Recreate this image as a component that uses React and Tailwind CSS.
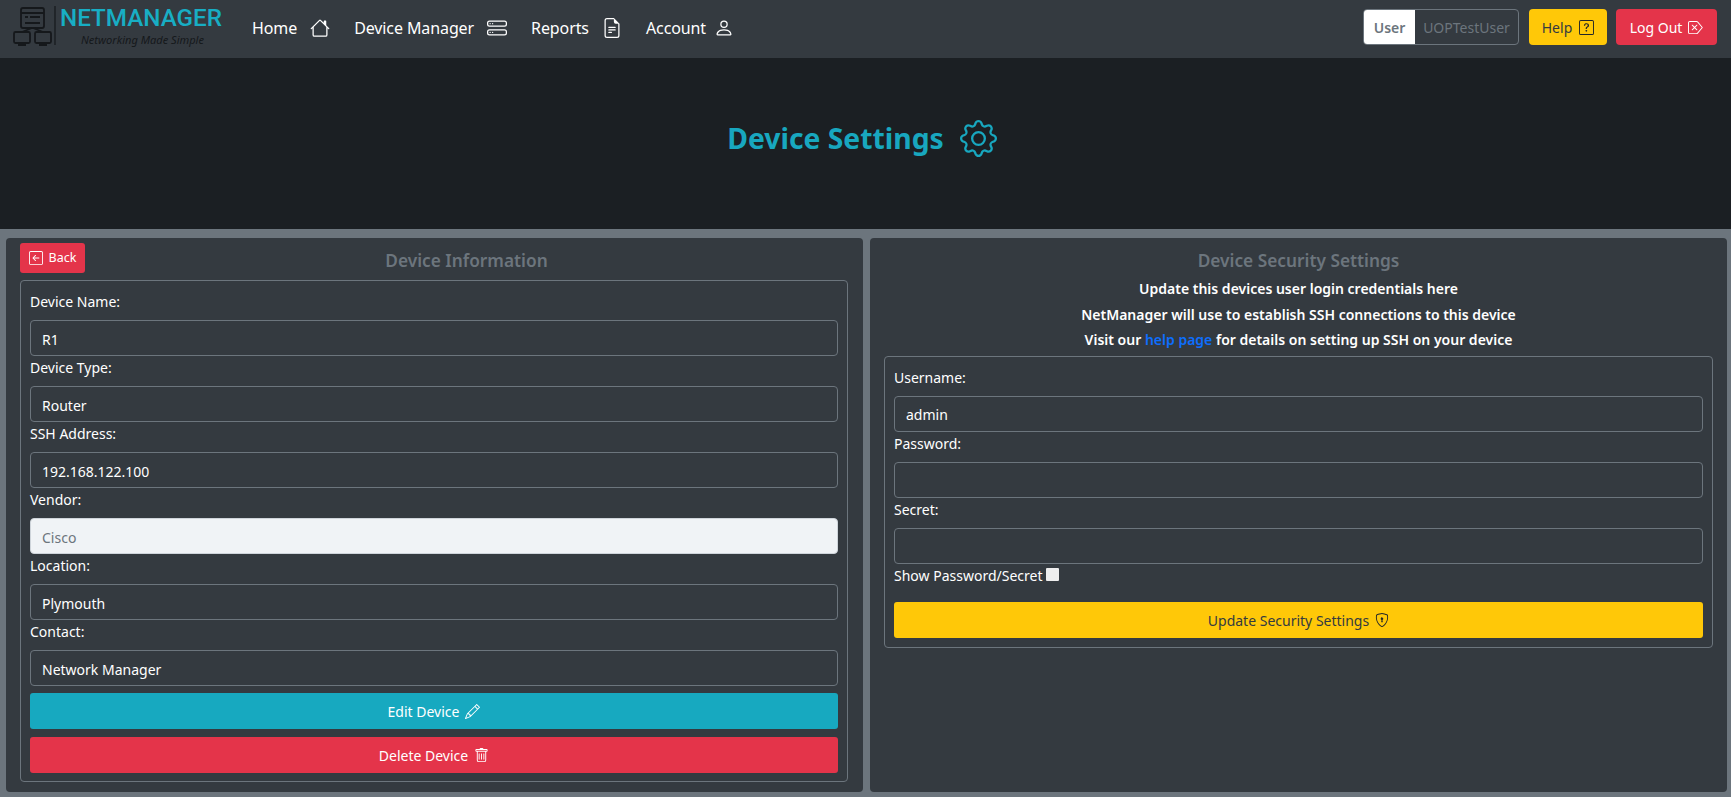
import {
  BsHouse,
  BsHddStack,
  BsFileEarmarkText,
  BsPerson,
  BsQuestionSquare,
  BsBackspaceReverse,
  BsGear,
  BsArrowLeftSquare,
  BsPencil,
  BsTrash,
  BsShieldLock,
} from "react-icons/bs";

const font = { fontFamily: '"Noto Sans", sans-serif' };

const Logo = () => (
  <svg width="225" height="58" viewBox="0 0 225 58" className="shrink-0">
    <g fill="none" stroke="#15181b" strokeWidth="1.8">
      <rect x="21" y="10" width="23" height="20" rx="2" />
      <path d="M21 15h23M25 19h3M30 19h10M25 25h15M32 30l-10 4M33 30l10 4" />
      <rect x="14" y="34" width="16" height="11" rx="1.5" />
      <rect x="35" y="34" width="16" height="11" rx="1.5" />
      <path d="M18 47h8M39 47h8" />
    </g>
    <path d="M55 8v39" stroke="#15181b" strokeWidth="1.2" />
    <text x="60" y="28" fill="#18aec4" fontSize="24.5" fontWeight="500" fontFamily="Roboto, sans-serif" textLength="162" lengthAdjust="spacingAndGlyphs">
      NETMANAGER
    </text>
    <text x="81" y="46" fill="#15181b" fontSize="11.5" fontStyle="italic" fontFamily="'Noto Sans', sans-serif" textLength="123" lengthAdjust="spacingAndGlyphs">
      Networking Made Simple
    </text>
  </svg>
);

const NavLink = ({ label, Icon, gap, size = 20 }) => (
  <a className={`flex items-center text-white text-[16px] tracking-[-0.1px] mt-[2px] ${gap}`}>
    <span>{label}</span>
    <Icon size={size} />
  </a>
);

const Field = ({ label, value, disabled }) => (
  <div>
    <label className="block h-6 mb-[6px] text-[14px] leading-[24px] text-white">{label}</label>
    <div
      className={`h-9 px-[11px] pt-[2px] flex items-center rounded border text-[14px] ${
        disabled
          ? "bg-[#f0f3f6] border-[#ced4da] text-[#6c757d]"
          : "bg-[#343a40] border-[#6c757d] text-white"
      }`}
    >
      {value}
    </div>
  </div>
);

const App = () => {
  return (
    <div className="h-[797px] flex flex-col bg-[#6c757d] overflow-hidden" style={font}>
      <nav className="h-[58px] shrink-0 bg-[#343a40] flex items-center justify-between pr-[14px] pb-1">
        <div className="flex items-center">
          <Logo />
          <div className="flex items-center gap-6 ml-[27px]">
            <NavLink label="Home" Icon={BsHouse} gap="gap-[13px]" />
            <NavLink label="Device Manager" Icon={BsHddStack} gap="gap-[13px]" />
            <NavLink label="Reports" Icon={BsFileEarmarkText} gap="gap-[13px]" />
            <NavLink label="Account" Icon={BsPerson} gap="gap-[8px]" />
          </div>
        </div>
        <div className="flex items-center text-[14px]">
          <div className="flex h-9 w-[156px] rounded border border-[#6c757d] overflow-hidden">
            <div className="w-[51px] bg-white text-[#6c757d] font-semibold flex items-center justify-center">User</div>
            <div className="flex-1 text-[#6c757d] flex items-center justify-center">UOPTestUser</div>
          </div>
          <button className="ml-[10px] h-9 w-[78px] rounded bg-[#ffc808] text-[#343a40] flex items-center justify-center gap-[7px]">
            Help <BsQuestionSquare size={15} className="text-[#212529]" />
          </button>
          <button className="ml-[9px] h-9 w-[101px] rounded bg-[#e4344a] text-white flex items-center justify-center gap-[6px]">
            Log Out <BsBackspaceReverse size={15} />
          </button>
        </div>
      </nav>

      <header className="h-[171px] shrink-0 bg-[#1b1f23] flex items-center justify-center gap-[16px] pb-[10px] pr-[7px] text-[#18a7bf]">
        <h1 className="text-[28.3px] font-bold leading-none">Device Settings</h1>
        <BsGear size={37} />
      </header>

      <main className="flex-1 grid grid-cols-2 gap-[7px] pt-[9px] pb-[5px] pr-[4px] pl-[6px]">
        <section className="rounded bg-[#343a40] pl-[14px] pr-[15px] pt-[5px] pb-[10px] flex flex-col">
          <div className="flex h-[37px]">
            <button className="w-[65px] h-[30px] rounded-[3px] bg-[#e4344a] text-white text-[12.5px] flex items-center justify-center gap-[6px]">
              <BsArrowLeftSquare size={14} /> Back
            </button>
            <h2 className="flex-1 text-center text-[#6c757d] text-[17.3px] font-semibold leading-[35px]">Device Information</h2>
          </div>
          <div className="flex-1 rounded border border-[#6c757d] px-[9px] pt-[9px]">
            <Field label="Device Name:" value="R1" />
            <Field label="Device Type:" value="Router" />
            <Field label="SSH Address:" value="192.168.122.100" />
            <Field label="Vendor:" value="Cisco" disabled />
            <Field label="Location:" value="Plymouth" />
            <Field label="Contact:" value="Network Manager" />
            <button className="mt-[7px] w-full h-9 rounded-[3px] bg-[#17a9c0] text-white text-[14px] flex items-center justify-center gap-[6px]">
              Edit Device <BsPencil size={15} />
            </button>
            <button className="mt-2 w-full h-9 rounded-[3px] bg-[#e4344a] text-white text-[14px] flex items-center justify-center gap-[6px]">
              Delete Device <BsTrash size={15} />
            </button>
          </div>
        </section>

        <section className="rounded bg-[#343a40] px-[14px] pt-[5px]">
          <h2 className="h-[37px] text-center text-[#6c757d] text-[17.3px] font-semibold leading-[35px]">Device Security Settings</h2>
          <div className="text-center text-white text-[14px] font-semibold leading-[25.5px] -mt-[4px] mb-[3px]">
            <p>Update this devices user login credentials here</p>
            <p>NetManager will use to establish SSH connections to this device</p>
            <p>
              Visit our <a className="text-[#0d6efd]">help page</a> for details on setting up SSH on your device
            </p>
          </div>
          <div className="rounded border border-[#6c757d] px-[9px] pt-[9px] pb-[9px]">
            <Field label="Username:" value="admin" />
            <Field label="Password:" value="" />
            <Field label="Secret:" value="" />
            <div className="flex items-center h-[24px] mb-[14px] text-white text-[14px]">
              Show Password/Secret
              <span className="ml-1 w-[13px] h-[13px] bg-[#eeeeee] rounded-[1px] mb-[2px]" />
            </div>
            <button className="w-full h-9 pt-[1px] rounded-[3px] bg-[#ffc808] text-[#343a40] text-[14px] flex items-center justify-center gap-[6px]">
              Update Security Settings <BsShieldLock size={14} className="text-[#212529]" />
            </button>
          </div>
        </section>
      </main>
    </div>
  );
};

export default App;
